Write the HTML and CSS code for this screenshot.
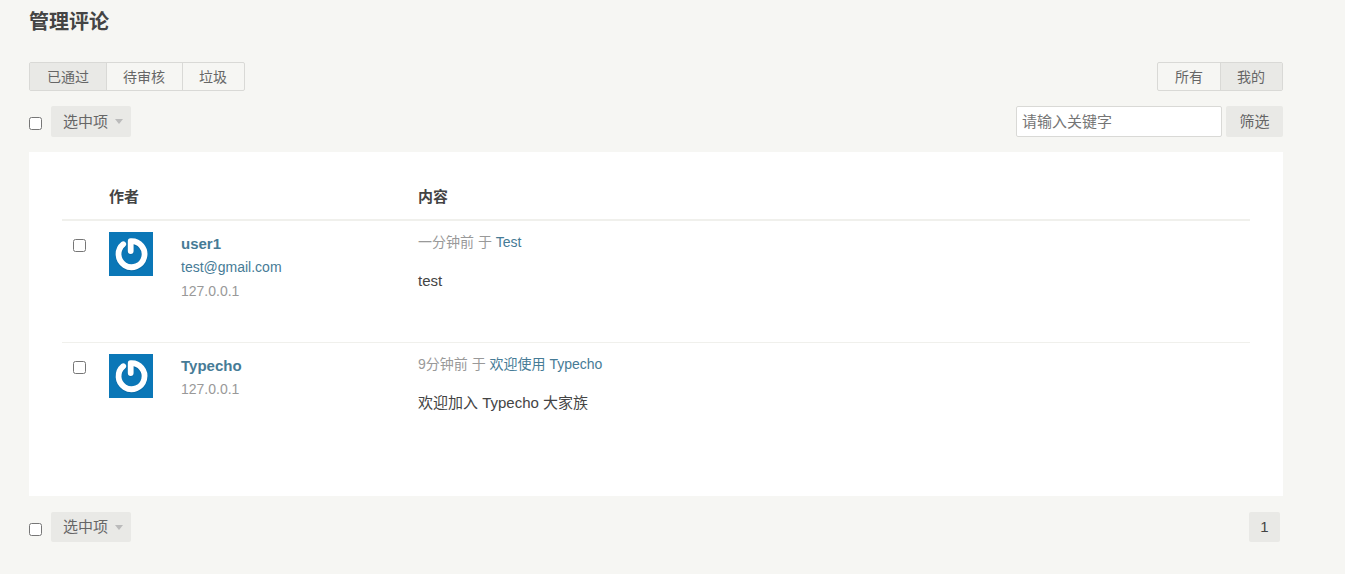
FILE: index.html
```html
<!DOCTYPE html>
<html lang="zh-CN">
<head>
<meta charset="utf-8">
<title>管理评论</title>
<link rel="stylesheet" href="styles.css">
</head>
<body>
<svg class="sprite" aria-hidden="true">
  <symbol id="avatar" viewBox="0 0 44 44">
    <rect width="44" height="44" fill="#0b77b7"/>
    <path d="M14.200 13A13 13 0 1 0 21.700 10V19.500" fill="none" stroke="#07609a" stroke-width="6.400" stroke-linecap="round" stroke-linejoin="round" opacity=".55"/>
    <path d="M14.200 12.200A13 13 0 1 0 21.700 9.200V19" fill="none" stroke="#fff" stroke-width="5.800" stroke-linecap="round" stroke-linejoin="round"/>
  </symbol>
</svg>
<main class="page">
  <h1 class="title">管理评论</h1>
  <nav class="tabs">
    <div class="tab-group">
      <a class="tab current" href="#approved">已通过</a>
      <a class="tab" href="#waiting">待审核</a>
      <a class="tab" href="#spam">垃圾</a>
    </div>
    <div class="tab-group">
      <a class="tab" href="#all">所有</a>
      <a class="tab current" href="#mine">我的</a>
    </div>
  </nav>
  <form class="toolbar">
    <div class="operate">
      <input class="check" type="checkbox" aria-label="全选">
      <button class="btn dropdown" type="button">选中项<span class="caret"></span></button>
    </div>
    <div class="search">
      <input class="keywords" type="text" placeholder="请输入关键字" aria-label="关键字">
      <button class="btn" type="button">筛选</button>
    </div>
  </form>
  <section class="card">
    <table class="comments">
      <colgroup><col class="col-check"><col class="col-avatar"><col class="col-author"><col></colgroup>
      <thead>
        <tr><th></th><th>作者</th><th></th><th>内容</th></tr>
      </thead>
      <tbody>
        <tr>
          <td><input class="check" type="checkbox" aria-label="选择 user1 的评论"></td>
          <td><svg class="avatar" role="img" aria-label="user1"><use href="#avatar"/></svg></td>
          <td class="author"><a class="name" href="#user1">user1</a><a href="mailto:test@gmail.com">test@gmail.com</a><span>127.0.0.1</span></td>
          <td><div class="meta">一分钟前 于 <a href="#test">Test</a></div><p class="content">test</p></td>
        </tr>
        <tr>
          <td><input class="check" type="checkbox" aria-label="选择 Typecho 的评论"></td>
          <td><svg class="avatar" role="img" aria-label="Typecho"><use href="#avatar"/></svg></td>
          <td class="author"><a class="name" href="#typecho">Typecho</a><span>127.0.0.1</span></td>
          <td><div class="meta">9分钟前 于 <a href="#welcome">欢迎使用 Typecho</a></div><p class="content">欢迎加入 Typecho 大家族</p></td>
        </tr>
      </tbody>
    </table>
  </section>
  <footer class="toolbar bottom">
    <div class="operate">
      <input class="check" type="checkbox" aria-label="全选">
      <button class="btn dropdown" type="button">选中项<span class="caret"></span></button>
    </div>
    <a class="page-number" href="#page-1">1</a>
  </footer>
</main>
</body>
</html>
```
FILE: styles.css
```css
* { box-sizing: border-box; }
body {
  margin: 0;
  background: #f6f6f3;
  color: #444;
  font: 15px/24px "Liberation Sans", "Noto Sans CJK SC", sans-serif;
}
a { color: #467b96; text-decoration: none; }
.sprite { display: none; }
.page { padding: 8px 62px 32px 29px; }
.title { margin: 0 0 26px; font-size: 20px; line-height: 28px; }
.tabs, .toolbar { display: flex; justify-content: space-between; }
.tab-group {
  display: flex;
  border: 1px solid #d9d9d6;
  border-radius: 2px;
}
.tab {
  padding: 1px 17px 0;
  color: #666;
  font-size: 14px;
  line-height: 26px;
}
.tab + .tab { border-left: 1px solid #d9d9d6; padding-left: 16px; }
.tab.current { background: #e9e9e6; }
.toolbar { margin: 15px 0; }
.operate { display: flex; align-items: center; gap: 9px; }
.check { width: 13px; height: 13px; margin: 0; }
.operate .check { margin-top: 4px; }
.btn {
  min-width: 57px;
  height: 31px;
  padding: 0 13px;
  border: 0;
  border-radius: 2px;
  background: #e9e9e6;
  color: #666;
  font: inherit;
}
.dropdown { display: flex; align-items: center; gap: 7px; padding: 0 8px 0 12px; }
.caret {
  border: 4px solid transparent;
  border-top: 5px solid #bbb;
  border-bottom: 0;
}
.search { display: flex; gap: 4px; }
.keywords {
  width: 206px;
  height: 31px;
  padding: 0 5px;
  border: 1px solid #d9d9d6;
  border-radius: 2px;
  background: #fff;
  font: inherit;
}
.keywords::placeholder { color: #757575; }
.card { padding: 33px; background: #fff; }
.comments { width: 100%; table-layout: fixed; border-collapse: separate; border-spacing: 0; }
.col-check { width: 36px; }
.col-avatar { width: 72px; }
.col-author { width: 237px; }
th {
  padding: 0 11px 11px;
  border-bottom: 2px solid #f0f0ec;
  line-height: 23px;
  text-align: left;
}
td { height: 122px; padding: 11px; vertical-align: top; }
tbody tr:not(:last-child) td { border-bottom: 1px solid #f0f0ec; }
tbody tr:last-child td { height: 120px; }
td .check { display: block; margin-top: 7px; }
.avatar { display: block; width: 44px; height: 44px; }
.author { color: #999; font-size: 14px; }
.author > * { display: block; }
.name { margin-bottom: -1px; font-size: 15px; font-weight: bold; }
.meta { color: #999; font-size: 14px; line-height: 21px; }
.content { margin: 16px 0 0; }
.bottom { margin: 16px 0 0; }
.bottom .btn { height: 30px; }
.page-number {
  width: 31px;
  margin-right: 3px;
  border-radius: 2px;
  background: #e9e9e6;
  color: #444;
  line-height: 30px;
  text-align: center;
}
```
